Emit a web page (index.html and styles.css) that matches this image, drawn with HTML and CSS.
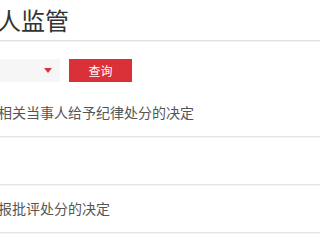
FILE: index.html
```html
<!DOCTYPE html>
<html lang="zh">
<head>
<meta charset="utf-8">
<link rel="stylesheet" href="styles.css">
</head>
<body>
<div class="page">
  <div class="header"><h1 class="title">人监管</h1></div>
  <div class="search">
    <div class="select"><span class="caret"></span></div>
    <button class="btn">查询</button>
  </div>
  <ul class="list">
    <li class="item">相关当事人给予纪律处分的决定</li>
    <li class="item"></li>
    <li class="item">报批评处分的决定</li>
  </ul>
</div>
</body>
</html>
```
FILE: styles.css
```css
html, body {
  margin: 0;
  padding: 0;
  background: #fff;
  overflow: hidden;
}
body {
  width: 320px;
  height: 240px;
  font-family: "Noto Sans CJK SC", "Noto Sans", sans-serif;
}
.page {
  width: 320px;
}
.header {
  height: 40px;
  border-bottom: 1px solid #e2e2e2;
  box-shadow: 0 1px 0 #f3f3f3;
}
.title {
  margin: 0 0 0 -3px;
  font-size: 24px;
  font-weight: normal;
  line-height: 40px;
  color: #333;
}
.search {
  display: flex;
  align-items: center;
  gap: 9px;
  margin-top: 18px;
  height: 23px;
}
.select {
  width: 60px;
  height: 23px;
  background: #f6f6f6;
  position: relative;
}
.caret {
  position: absolute;
  left: 44px;
  top: 9px;
  width: 0;
  height: 0;
  border-left: 4px solid transparent;
  border-right: 4px solid transparent;
  border-top: 5px solid #d9323a;
}
.btn {
  width: 63px;
  height: 23px;
  border: 0;
  padding: 0;
  background: #da3139;
  color: #fff;
  font-family: inherit;
  font-size: 12px;
}
.list {
  list-style: none;
  margin: 7px 0 0 0;
  padding: 0;
}
.item {
  height: 47px;
  line-height: 47px;
  border-bottom: 1px solid #e4e4e4;
  box-shadow: 0 1px 0 #f4f4f4;
  font-size: 14px;
  color: #555;
  white-space: nowrap;
  text-indent: -2px;
}
```
